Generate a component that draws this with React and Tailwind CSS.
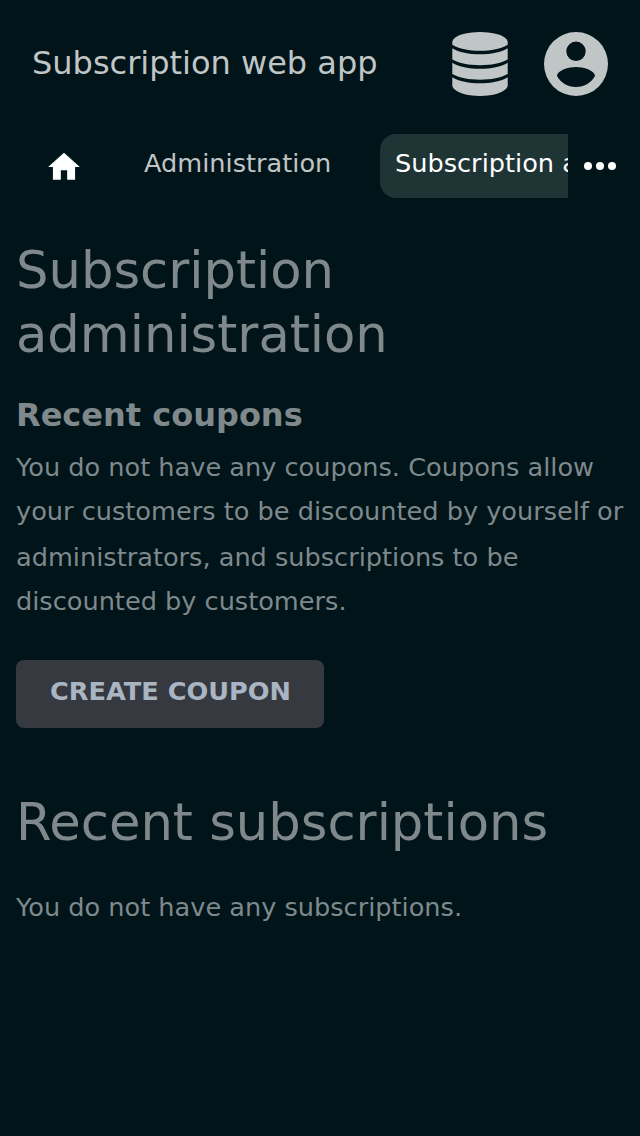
import { MdHome } from "react-icons/md";

function DatabaseIcon() {
  return (
    <svg viewBox="0 0 56 64" className="h-16 w-14" fill="currentColor">
      <path d="M.3 9.500C2 3.500 14 0 28 0s26 3.500 27.700 9.500v3.300C49 16.800 39 18.800 28 18.800S7 16.800 .3 12.800z" />
      <path d="M.3 16.200C7 20.200 17 22.200 28 22.200S49 20.200 55.700 16.200V27.500C49 31.300 39 33.200 28 33.200S7 31.300 .3 27.500z" />
      <path d="M.3 30.700C7 34.700 17 36.700 28 36.700S49 34.700 55.700 30.700V42C49 45.800 39 47.700 28 47.700S7 45.800 .3 42z" />
      <path d="M.3 45.200C7 49.200 17 51.200 28 51.200S49 49.200 55.700 45.200v8.800C54 60 42 64 28 64S2 60 .3 54z" />
    </svg>
  );
}

function AccountIcon() {
  return (
    <svg viewBox="0 0 64 64" className="ml-9 h-16 w-16" fill="currentColor">
      <path
        fillRule="evenodd"
        d="M32 0a32 32 0 1 0 0 64a32 32 0 1 0 0-64zM32 9.600a9.700 9.700 0 1 1 0 19.400a9.700 9.700 0 1 1 0-19.400zM32 35C25 35 13 38.300 13 44C16.500 50.500 23.500 55 32 55S47.500 50.500 51 44C51 38.300 39 35 32 35z"
      />
    </svg>
  );
}

function Header() {
  return (
    <header className="flex h-32 items-center justify-between px-8 text-[#c0c5c6]">
      <span className="pb-[2px] text-[32px] leading-[40px]">Subscription web app</span>
      <div className="flex items-center">
        <DatabaseIcon />
        <AccountIcon />
      </div>
    </header>
  );
}

function NavBar() {
  return (
    <nav className="flex h-[76px] items-start pt-[6px] text-[25.6px] leading-[58px]">
      <div className="flex h-16 w-32 items-center justify-center pt-[2px] text-white">
        <MdHome className="h-[38px] w-[38px]" />
      </div>
      <span className="w-[252px] shrink-0 pl-4 text-[#c0c5c6]">Administration</span>
      <div className="h-16 w-[188px] shrink-0 overflow-hidden whitespace-nowrap rounded-l-2xl bg-[#1e3435] pl-[15px] text-white">
        Subscription administration
      </div>
      <div className="flex h-16 w-[72px] items-center gap-1 px-4">
        <i className="h-2 w-2 rounded-full bg-white" />
        <i className="h-2 w-2 rounded-full bg-white" />
        <i className="h-2 w-2 rounded-full bg-white" />
      </div>
    </nav>
  );
}

export default function App() {
  return (
    <div className="min-h-[1136px] w-[640px] overflow-hidden bg-[#001419] font-['DejaVu_Sans',sans-serif]">
      <Header />
      <NavBar />
      <main className="px-4 pt-[34px] text-[#7f898c]">
        <h1 className="text-[51.2px] leading-[64px]">Subscription<br />administration</h1>
        <h2 className="mt-[29px] text-[32px] leading-[40px] font-bold">Recent coupons</h2>
        <p className="mt-[10px] text-[25.6px] leading-[44px] whitespace-nowrap">
          <span className="block">You do not have any coupons. Coupons allow</span>
          <span className="block">your customers to be discounted by yourself or</span>
          <span className="block pt-[2px]">administrators, and subscriptions to be</span>
          <span className="block">discounted by customers.</span>
        </p>
        <button className="mt-[37px] block h-[68px] w-[308px] rounded-lg bg-[#36393f] pb-[5px] pl-px text-[25.6px] font-bold text-[#a9b5c2]">
          CREATE COUPON
        </button>
        <h1 className="mt-[62px] text-[51.2px] leading-[64px]">Recent subscriptions</h1>
        <p className="mt-[31px] text-[25.6px] leading-[44.8px]">You do not have any subscriptions.</p>
      </main>
    </div>
  );
}
